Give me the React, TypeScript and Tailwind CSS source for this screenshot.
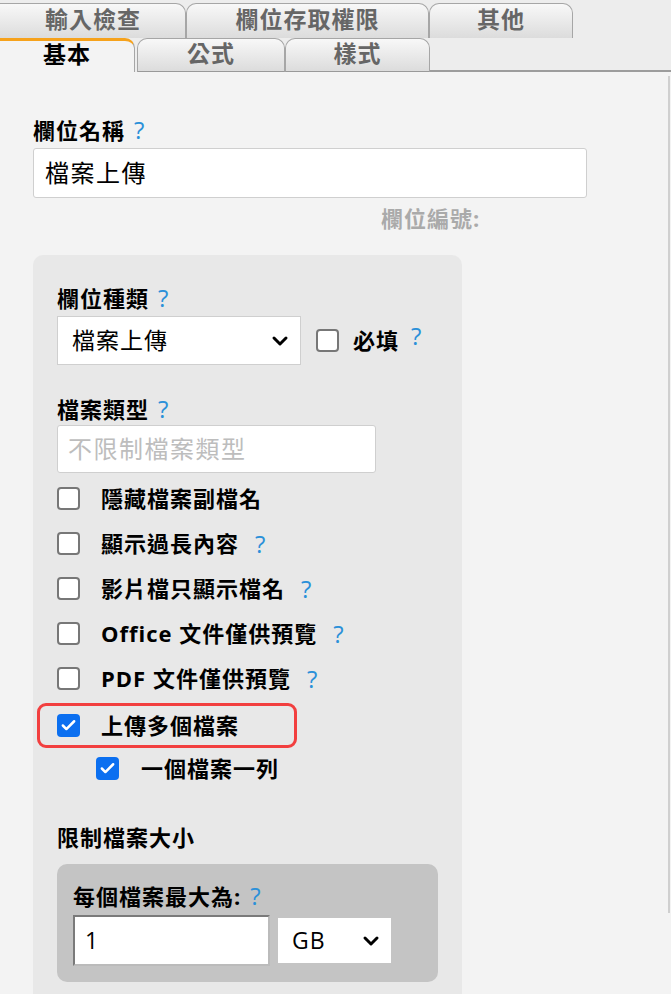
import React from 'react'
import { ChevronDown, Check } from 'lucide-react'

const font = { fontFamily: '"Open Sans", "Noto Sans CJK TC", sans-serif' }

const Help = ({ className = '' }: { className?: string }) => (
  <span className={`text-[#2b90d9] font-normal text-[24px] ml-[9px] ${className}`}>?</span>
)

const Box = ({ checked = false }: { checked?: boolean }) =>
  checked ? (
    <div className="w-[23px] h-[23px] rounded-[4px] bg-[#0b6ff0] flex items-center justify-center shrink-0">
      <Check size={17} strokeWidth={3.5} color="#fff" />
    </div>
  ) : (
    <div className="w-[23px] h-[23px] rounded-[4px] border-2 border-[#777] bg-white shrink-0" />
  )

const Row = ({ label, help = false }: { label: string; help?: boolean }) => (
  <div className="flex items-center h-[45px]">
    <Box />
    <span className="ml-[21px] font-bold">{label}</span>
    {help && <Help className="ml-[16px]" />}
  </div>
)

const BackTab = ({ label, w, first = false }: { label: string; w: string; first?: boolean }) => (
  <div
    className={`${w} h-[35px] pb-[3px] rounded-t-[10px] border border-b-0 border-[#a6a6a6] bg-linear-to-b from-[#f8f8f8] to-[#dcdcdc] flex items-center justify-center font-bold text-[23px] text-[#666] ${first ? '-ml-[12px] pl-[12px]' : ''}`}
  >
    {label}
  </div>
)

export default function App() {
  return (
    <div className="relative w-[671px] h-[994px] overflow-hidden bg-[#f3f3f3] text-[22px] tracking-[1px] text-black" style={font}>
      {/* tabs */}
      <div className="bg-[#ededed] pt-[3px]">
        <div className="flex h-[35px] leading-none">
          <BackTab label="輸入檢查" w="w-[198px]" first />
          <BackTab label="欄位存取權限" w="w-[243px]" />
          <BackTab label="其他" w="w-[144px]" />
        </div>
        <div className="flex h-[34px] leading-none text-[23px]">
          <div className="w-[147px] -ml-[12px] pl-[12px] pb-[4px] rounded-tr-[10px] border-t-[3px] border-r border-t-[#f6a21c] border-r-[#a6a6a6] bg-[#f3f3f3] flex items-center justify-center font-bold">
            基本
          </div>
          <div className="w-[148px] ml-[2px] pb-[4px] rounded-t-[10px] border border-[#a6a6a6] border-b-[#999] bg-linear-to-b from-[#f8f8f8] to-[#dcdcdc] flex items-center justify-center font-bold text-[#666]">
            公式
          </div>
          <div className="w-[145px] pb-[4px] rounded-t-[10px] border border-[#a6a6a6] border-b-[#999] bg-linear-to-b from-[#f8f8f8] to-[#dcdcdc] flex items-center justify-center font-bold text-[#666]">
            樣式
          </div>
          <div className="flex-1 border-b-2 border-[#9c9c9c]" />
        </div>
      </div>

      {/* scrollbar edge */}
      <div className="absolute right-[1px] top-[76px] w-[2px] h-[837px] bg-[#cfcfcf]" />

      <div className="px-[33px] pt-[43px]">
        <div className="h-[30px] leading-[30px] font-bold">
          欄位名稱<Help />
        </div>
        <div className="mt-[3px] w-[554px] h-[50px] bg-white border border-[#cfcfcf] rounded-[3px] flex items-center pl-[11px] text-[24px] tracking-[1.5px]">
          檔案上傳
        </div>
        <div className="mt-[5px] h-[30px] leading-[30px] pl-[348px] font-bold text-[#aaa]">欄位編號:</div>

        <div className="mt-[22px] w-[429px] h-[800px] rounded-[10px] bg-[#e8e8e8] px-[24px] pt-[28px]">
          <div className="h-[30px] leading-[30px] font-bold">
            欄位種類<Help />
          </div>
          <div className="mt-[3px] flex items-center h-[49px]">
            <div className="w-[244px] h-[49px] bg-white border border-[#cfcfcf] flex items-center justify-between pl-[14px] pr-[8px] text-[23px] shrink-0">
              檔案上傳
              <ChevronDown size={24} strokeWidth={3} />
            </div>
            <div className="ml-[15px]">
              <Box />
            </div>
            <span className="ml-[14px] font-bold">必填</span>
            <Help className="ml-[12px] -translate-y-[5px]" />
          </div>

          <div className="mt-[29px] h-[30px] leading-[30px] font-bold">
            檔案類型<Help />
          </div>
          <div className="mt-[1px] w-[319px] h-[48px] bg-white border border-[#cfcfcf] rounded-[3px] flex items-center pl-[10px] text-[24px] tracking-[1.5px] text-[#bdbdbd]">
            不限制檔案類型
          </div>

          <div className="mt-[3px]">
            <Row label="隱藏檔案副檔名" />
            <Row label="顯示過長內容" help />
            <Row label="影片檔只顯示檔名" help />
            <Row label="Office 文件僅供預覽" help />
            <Row label="PDF 文件僅供預覽" help />
          </div>
          <div className="mt-[2px] -ml-[20px] w-[260px] h-[45px] border-[3px] border-[#f23f3f] rounded-[9px] pl-[17px] flex items-center">
            <Box checked />
            <span className="ml-[21px] font-bold">上傳多個檔案</span>
          </div>
          <div className="flex items-center h-[40px] pl-[39px]">
            <Box checked />
            <span className="ml-[22px] font-bold">一個檔案一列</span>
          </div>

          <div className="mt-[34px] h-[30px] leading-[30px] font-bold">限制檔案大小</div>
          <div className="mt-[12px] w-[381px] h-[118px] rounded-[10px] bg-[#c4c4c4] px-[16px] pt-[17px]">
            <div className="h-[30px] leading-[30px] font-bold">
              每個檔案最大為:<Help />
            </div>
            <div className="mt-[4px] flex items-center">
              <div className="w-[197px] h-[51px] bg-white border-2 border-[#7a7a7a] border-r-[#bbb] border-b-[#bbb] flex items-center pl-[10px] text-[23px]">
                1
              </div>
              <div className="ml-[8px] w-[113px] h-[45px] bg-white flex items-center justify-between pl-[14px] pr-[8px] text-[23px]">
                GB
                <ChevronDown size={24} strokeWidth={3} />
              </div>
            </div>
          </div>
        </div>
      </div>
    </div>
  )
}
